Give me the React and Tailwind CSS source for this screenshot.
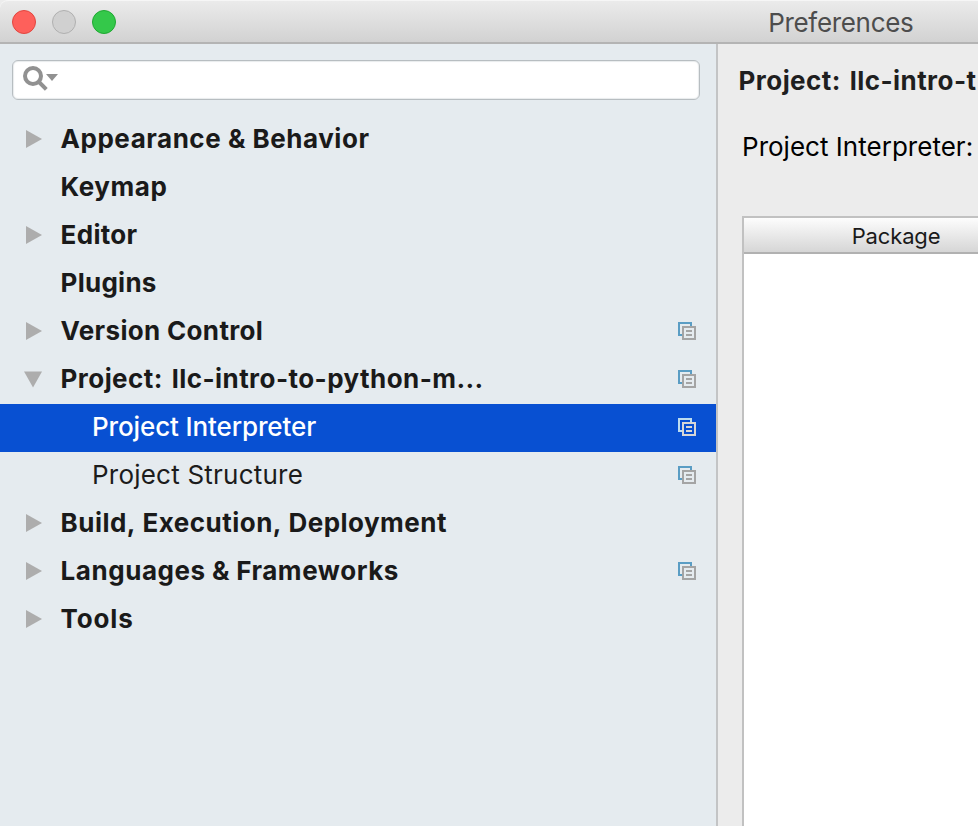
const rows = [
  { label: "Appearance & Behavior", arrow: "right", spacing: "tracking-[0.53px]" },
  { label: "Keymap", spacing: "tracking-[0.54px]" },
  { label: "Editor", arrow: "right", spacing: "tracking-[0.3px]" },
  { label: "Plugins", spacing: "tracking-[0.25px]" },
  { label: "Version Control", arrow: "right", shared: true, spacing: "tracking-[0.33px]" },
  { label: "Project: llc-intro-to-python-m...", arrow: "down", shared: true, spacing: "tracking-[0.43px] [word-spacing:2.4px]" },
  { label: "Project Interpreter", child: true, selected: true, shared: true, spacing: "tracking-[-0.12px]" },
  { label: "Project Structure", child: true, shared: true, spacing: "tracking-[0.22px]" },
  { label: "Build, Execution, Deployment", arrow: "right", spacing: "tracking-[0.48px] [word-spacing:0.6px]" },
  { label: "Languages & Frameworks", arrow: "right", shared: true, spacing: "tracking-[0.55px] [word-spacing:-0.5px]" },
  { label: "Tools", arrow: "right", spacing: "tracking-[0.85px]" },
];

function Arrow({ direction }) {
  return (
    <svg width="18" height="18" viewBox="0 0 18 18" fill="#adadad" className="block">
      {direction === "right" && <path d="M2 0 L18 9 L2 18 Z" />}
      {direction === "down" && <path d="M0 1.5 H18 L9 17.5 Z" />}
    </svg>
  );
}

function SharedIcon({ selected }) {
  const back = selected ? "#bcdcef" : "#5a9dc4";
  const front = selected ? "#d6d6d6" : "#a4a4a4";
  return (
    <svg width="18" height="18" viewBox="0 0 18 18" className="block" shapeRendering="crispEdges">
      <path d="M0 0H14V4H12V2H2V12H4V14H0Z" fill={back} />
      <path d="M4 4H18V18H4ZM6 6V16H16V6Z" fill={front} fillRule="evenodd" />
      <path d="M8 8H14V10H8ZM8 12H14V14H8Z" fill={front} />
    </svg>
  );
}

function Row({ row }) {
  const text = row.selected
    ? "text-white font-medium"
    : row.child
      ? "text-[#1c1c1c] font-normal"
      : "text-[#1a1a1a] font-bold";
  return (
    <div className={`flex h-12 items-center pb-0.5 pl-6 pr-5 ${row.selected ? "bg-[#0850d2]" : ""}`}>
      <Arrow direction={row.arrow} />
      <span
        className={`flex-1 whitespace-nowrap pb-px text-[26px] leading-8 ${row.child ? "pl-[50px]" : "pl-[18.6px]"} ${row.spacing} ${text}`}
      >
        {row.label}
      </span>
      {row.shared && <SharedIcon selected={row.selected} />}
    </div>
  );
}

export default function App() {
  return (
    <div className="flex h-[826px] w-[978px] flex-col overflow-hidden bg-[#ececec] font-['Inter',sans-serif]">
      <header className="flex h-11 shrink-0 items-center gap-4 rounded-tl-[8px] border-b-2 border-t border-b-[#b4b4b4] border-t-[#f6f6f6] bg-linear-to-b from-[#ebebeb] to-[#d2d2d2] pl-3">
        <span className="size-6 rounded-full border border-[#e2463f] bg-[#fe605b]" />
        <span className="size-6 rounded-full border border-[#b0b0b0] bg-[#d0d0d0]" />
        <span className="size-6 rounded-full border border-[#1fa832] bg-[#34c84a]" />
        <h1 className="ml-[636.2px] whitespace-nowrap pt-0.5 text-[26px] font-normal leading-8 tracking-[-0.32px] text-[#4d4d4d]">
          Preferences
        </h1>
      </header>
      <div className="flex min-h-0 flex-1">
        <aside className="w-[718px] shrink-0 border-r-2 border-[#c3c4c5] bg-[#e5ebef] pt-4">
          <div className="ml-3 flex h-10 w-[688px] rounded-[6px] border border-[#b7bdc1] bg-white pl-2.5 pt-[5px] shadow-[inset_0_0_1px_1px_#e8ebed]">
            <svg width="36" height="26" viewBox="0 0 36 26" fill="none">
              <circle cx="10" cy="10" r="8" stroke="#919191" strokeWidth="4" />
              <path d="M15.5 15.5 L23.3 23.3" stroke="#919191" strokeWidth="4" />
              <path d="M23 8H35L29 15Z" fill="#919191" />
            </svg>
          </div>
          <nav className="mt-4">
            {rows.map((row) => (
              <Row key={row.label} row={row} />
            ))}
          </nav>
        </aside>
        <main className="flex min-w-0 flex-1 flex-col overflow-hidden">
          <h2 className="mt-[21px] whitespace-nowrap pl-[20.6px] text-[26px] font-bold leading-8 tracking-[0.43px] text-[#1f1f1f] [word-spacing:2.4px]">
            Project: llc-intro-t
          </h2>
          <p className="mt-[34px] whitespace-nowrap pl-6 text-[26px] leading-8 tracking-[0.02px] text-black">Project Interpreter:</p>
          <section className="ml-6 mt-[53px] flex flex-1 flex-col border-l-2 border-t-2 border-[#c1c1c1] bg-white">
            <div className="flex h-9 items-center border-b-2 border-[#b1b1b1] bg-linear-to-b from-[#fdfdfd] to-[#d6d6d6] pl-[107.7px] pt-0.5 text-[22px] leading-8 tracking-[-0.15px] text-[#1a1a1a]">
              Package
            </div>
          </section>
        </main>
      </div>
    </div>
  );
}
